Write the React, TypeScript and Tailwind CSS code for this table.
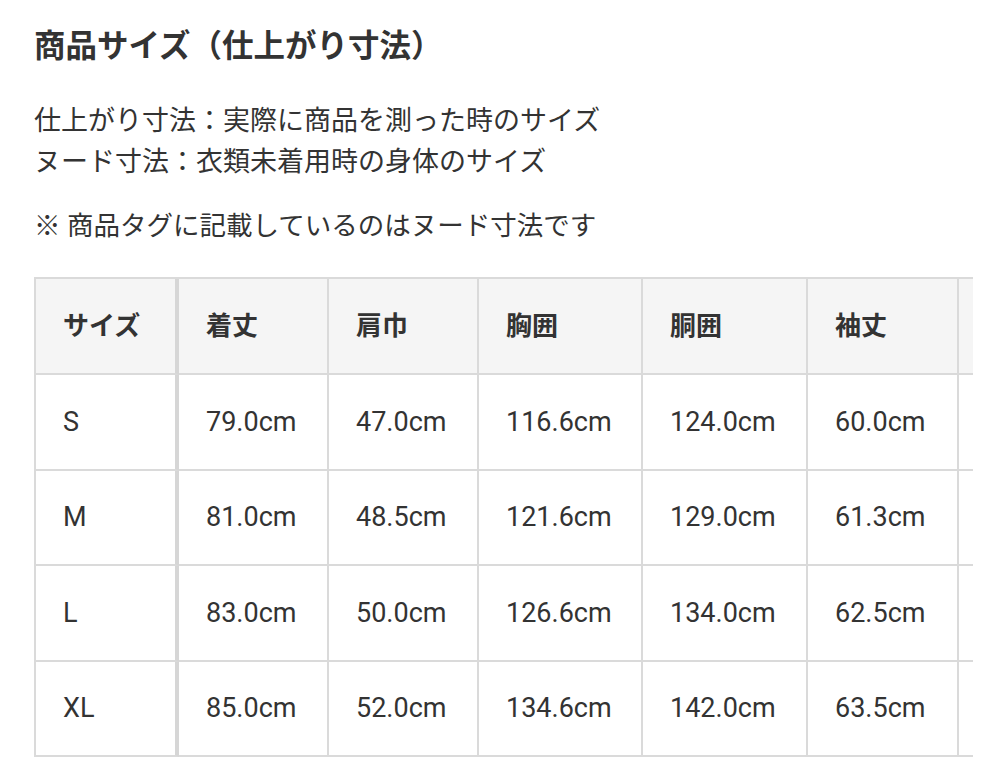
const headers = ['サイズ', '着丈', '肩巾', '胸囲', '胴囲', '袖丈', ''];

const rows = [
  { size: 'S', values: ['79.0cm', '47.0cm', '116.6cm', '124.0cm', '60.0cm', ''] },
  { size: 'M', values: ['81.0cm', '48.5cm', '121.6cm', '129.0cm', '61.3cm', ''] },
  { size: 'L', values: ['83.0cm', '50.0cm', '126.6cm', '134.0cm', '62.5cm', ''] },
  { size: 'XL', values: ['85.0cm', '52.0cm', '134.6cm', '142.0cm', '63.5cm', ''] },
];

// widths include each cell's right border
const colWidths = ['w-[143px]', 'w-[150px]', 'w-[150px]', 'w-[164px]', 'w-[165px]', 'w-[151px]', 'w-[150px]'];
const rowHeights = ['h-[96px]', 'h-[96px]', 'h-[95px]', 'h-[96px]', 'h-[95px]'];

function Cell({ index, children, header }: { index: number; children: React.ReactNode; header?: boolean }) {
  return (
    <div
      className={`${colWidths[index]} shrink-0 flex items-center pl-[27px] border-b-2 border-[#dadada] ${
        index === 0 ? 'border-r-4 border-r-[#d6d6d6]' : 'border-r-2'
      } ${header ? 'bg-[#f5f5f5] font-bold text-[26px]' : 'bg-white text-[27px]'}`}
    >
      {children}
    </div>
  );
}

export default function App() {
  return (
    <div className="min-h-[768px] bg-white text-[#333] px-[34px] font-['Roboto','Noto_Sans_CJK_JP',sans-serif]">
      <h2 className="pt-[27px] text-[31.5px] leading-[40px] font-bold">商品サイズ（仕上がり寸法）</h2>

      <div className="mt-[34px] text-[27px] leading-[41px]">
        <p>仕上がり寸法：実際に商品を測った時のサイズ</p>
        <p>ヌード寸法：衣類未着用時の身体のサイズ</p>
      </div>

      <p className="mt-[22px] text-[26.5px] leading-[41px]">※ 商品タグに記載しているのはヌード寸法です</p>

      <div className="mt-[31px] w-[939px] overflow-hidden">
        <div className="w-[1100px] border-t-2 border-l-2 border-[#dadada]">
          <div className={`flex ${rowHeights[0]}`}>
            {headers.map((h, i) => (
              <Cell key={i} index={i} header>
                {h}
              </Cell>
            ))}
          </div>
          {rows.map((r, ri) => (
            <div key={r.size} className={`flex ${rowHeights[ri + 1]}`}>
              <Cell index={0}>{r.size}</Cell>
              {r.values.map((v, vi) => (
                <Cell key={vi} index={vi + 1}>
                  {v}
                </Cell>
              ))}
            </div>
          ))}
        </div>
      </div>
    </div>
  );
}
